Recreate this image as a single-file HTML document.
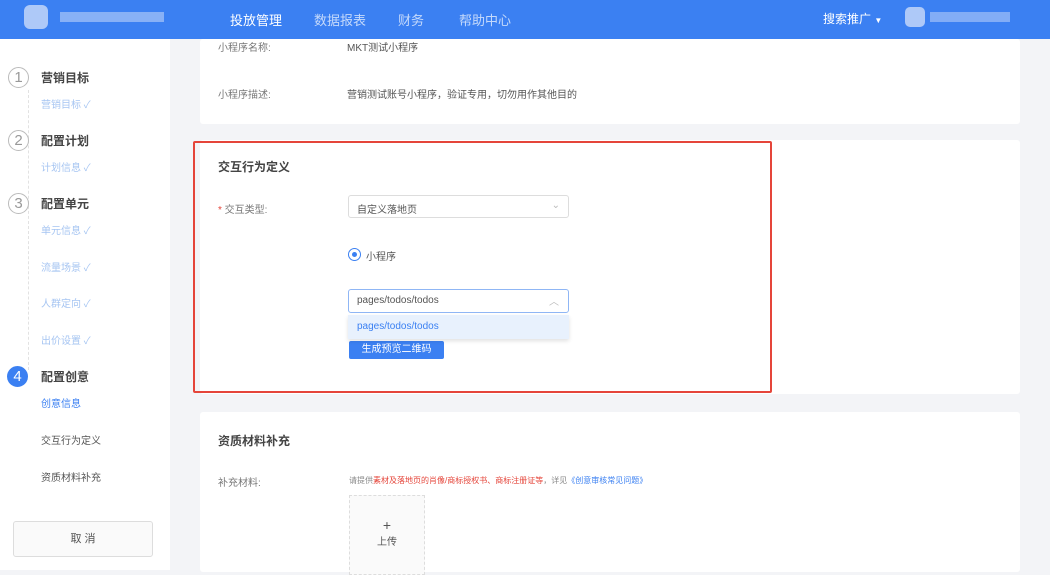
<!DOCTYPE html>
<html><head><meta charset="utf-8"><style>
*{margin:0;padding:0;box-sizing:border-box}
body{width:1050px;height:570px;overflow:hidden;background:#f3f4f7;font-family:"Liberation Sans","Noto Sans CJK SC",sans-serif;position:relative;color:#333}
.a{position:absolute}
.hdr{left:0;top:0;width:1050px;height:39px;background:#3b80f2}
.nav{top:10px;font-size:13px;color:rgba(255,255,255,.7)}
.side{left:0;top:39px;width:170px;height:531px;background:#fff}
.circ{width:21px;height:21px;border:1px solid #bbb;border-radius:50%;font-size:15px;color:#999;text-align:center;line-height:19px}
.st{font-size:12px;font-weight:bold;color:#444}
.sub{font-size:10px;color:#a6c5f2}
.card{background:#fff;border-radius:3px}
.lbl{font-size:10px;color:#777}
.vline{left:28px;border-left:1px dashed #e2e2e2}
</style></head><body>
<div class="a hdr"></div>
<div class="a" style="left:24px;top:5px;width:24px;height:24px;background:#dfe8fb;opacity:.7;border-radius:6px"></div>
<div class="a" style="left:60px;top:12px;width:104px;height:10px;background:#c9d9fa;opacity:.55"></div>
<div class="a nav" style="left:230px;color:#fff">投放管理</div>
<div class="a nav" style="left:314px">数据报表</div>
<div class="a nav" style="left:398px">财务</div>
<div class="a nav" style="left:459px">帮助中心</div>
<div class="a nav" style="left:823px;color:#fff;font-size:12px">搜索推广 <span style="font-size:8px">▼</span></div>
<div class="a" style="left:905px;top:7px;width:20px;height:20px;background:#dfe8fb;opacity:.7;border-radius:5px"></div>
<div class="a" style="left:930px;top:12px;width:80px;height:10px;background:#c9d9fa;opacity:.5"></div>

<div class="a side"></div>
<div class="a vline" style="top:90px;height:280px"></div>
<div class="a circ" style="left:8px;top:67px;background:#fff">1</div>
<div class="a st" style="left:41px;top:69px">营销目标</div>
<div class="a sub" style="left:41px;top:96px">营销目标 ✓</div>
<div class="a circ" style="left:8px;top:130px;background:#fff">2</div>
<div class="a st" style="left:41px;top:132px">配置计划</div>
<div class="a sub" style="left:41px;top:159px">计划信息 ✓</div>
<div class="a circ" style="left:8px;top:193px;background:#fff">3</div>
<div class="a st" style="left:41px;top:195px">配置单元</div>
<div class="a sub" style="left:41px;top:222px">单元信息 ✓</div>
<div class="a sub" style="left:41px;top:259px">流量场景 ✓</div>
<div class="a sub" style="left:41px;top:295px">人群定向 ✓</div>
<div class="a sub" style="left:41px;top:332px">出价设置 ✓</div>
<div class="a circ" style="left:7px;top:366px;background:#3b80f2;border-color:#3b80f2;color:#fff">4</div>
<div class="a st" style="left:41px;top:368px">配置创意</div>
<div class="a sub" style="left:41px;top:395px;color:#3b80f2">创意信息</div>
<div class="a sub" style="left:41px;top:432px;color:#555">交互行为定义</div>
<div class="a sub" style="left:41px;top:469px;color:#555">资质材料补充</div>
<div class="a" style="left:13px;top:521px;width:140px;height:36px;border:1px solid #ddd;border-radius:3px;background:#fafafa;font-size:11px;color:#555;text-align:center;line-height:34px">取 消</div>

<div class="a card" style="left:200px;top:39px;width:820px;height:85px"></div>
<div class="a lbl" style="left:218px;top:39px">小程序名称:</div>
<div class="a lbl" style="left:347px;top:39px;color:#555">MKT测试小程序</div>
<div class="a lbl" style="left:218px;top:86px">小程序描述:</div>
<div class="a lbl" style="left:347px;top:86px;color:#555">营销测试账号小程序，验证专用，切勿用作其他目的</div>

<div class="a card" style="left:200px;top:140px;width:820px;height:254px"></div>
<div class="a" style="left:193px;top:141px;width:579px;height:252px;border:2px solid #e5453a;border-radius:2px"></div>
<div class="a" style="left:218px;top:158px;font-size:12px;font-weight:bold;color:#444">交互行为定义</div>
<div class="a lbl" style="left:218px;top:201px"><span style="color:#e5453a">*</span> 交互类型:</div>
<div class="a" style="left:348px;top:195px;width:221px;height:23px;border:1px solid #ddd;border-radius:3px;font-size:10px;color:#555;padding:5px 8px">自定义落地页<span style="position:absolute;right:8px;top:4px;color:#bbb">⌄</span></div>
<div class="a" style="left:348px;top:248px;width:13px;height:13px;border:1px solid #3b80f2;border-radius:50%"></div>
<div class="a" style="left:352px;top:252px;width:5px;height:5px;background:#3b80f2;border-radius:50%"></div>
<div class="a lbl" style="left:366px;top:248px;color:#555">小程序</div>
<div class="a" style="left:348px;top:289px;width:221px;height:24px;border:1px solid #8fb6f5;border-radius:3px;font-size:10px;color:#555;padding:5px 8px">pages/todos/todos<span style="position:absolute;right:9px;top:3px;color:#bbb">︿</span></div>
<div class="a" style="left:349px;top:341px;width:95px;height:18px;background:#3b80f2;border-radius:2px;color:#fff;font-size:10px;text-align:center;line-height:18px">生成预览二维码</div>
<div class="a" style="left:348px;top:315px;width:221px;height:24px;background:#e8f1fd;box-shadow:0 2px 4px rgba(0,0,0,.12);font-size:10px;color:#3b80f2;padding:6px 9px">pages/todos/todos</div>

<div class="a card" style="left:200px;top:412px;width:820px;height:160px"></div>
<div class="a" style="left:218px;top:432px;font-size:12px;font-weight:bold;color:#444">资质材料补充</div>
<div class="a lbl" style="left:218px;top:474px">补充材料:</div>
<div class="a" style="left:349px;top:475px;font-size:8px;color:#888">请提供<span style="color:#e5453a">素材及落地页的肖像/商标授权书、商标注册证等</span>，详见<span style="color:#3b80f2">《创意审核常见问题》</span></div>
<div class="a" style="left:349px;top:495px;width:76px;height:80px;border:1px dashed #ddd;background:#fafafa;text-align:center;font-size:10px;color:#555;padding-top:22px;line-height:15px"><span style="font-size:14px">+</span><br>上传</div>
</body></html>
